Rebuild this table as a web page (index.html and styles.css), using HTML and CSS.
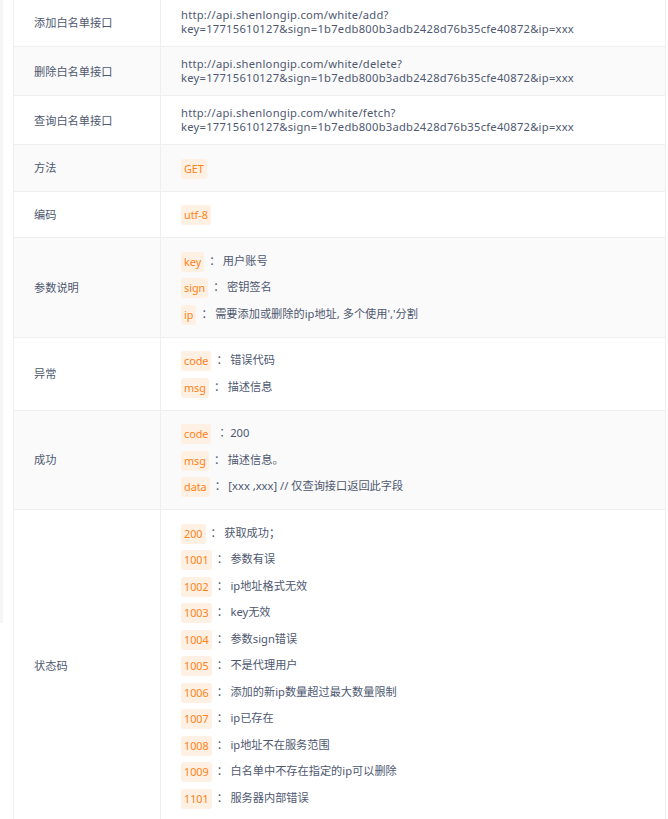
FILE: index.html
```
<!DOCTYPE html>
<html lang="zh-CN">
<head>
  <meta charset="UTF-8" />
  <meta name="viewport" content="width=device-width, initial-scale=1" />
  <title>白名单接口说明</title>
  <link rel="stylesheet" href="styles.css">
</head>
<body>
  <div class="edge"></div>
  <table class="api-table">
    <colgroup>
      <col class="col-label">
      <col>
    </colgroup>
    <tr>
      <td class="label">添加白名单接口</td>
      <td class="url">http://api.shenlongip.com/white/add?<br>key=17715610127&amp;sign=1b7edb800b3adb2428d76b35cfe40872&amp;ip=xxx</td>
    </tr>
    <tr>
      <td class="label">删除白名单接口</td>
      <td class="url">http://api.shenlongip.com/white/delete?<br>key=17715610127&amp;sign=1b7edb800b3adb2428d76b35cfe40872&amp;ip=xxx</td>
    </tr>
    <tr>
      <td class="label">查询白名单接口</td>
      <td class="url">http://api.shenlongip.com/white/fetch?<br>key=17715610127&amp;sign=1b7edb800b3adb2428d76b35cfe40872&amp;ip=xxx</td>
    </tr>
    <tr>
      <td class="label">方法</td>
      <td><div class="item"><span class="tag">GET</span></div></td>
    </tr>
    <tr>
      <td class="label">编码</td>
      <td><div class="item"><span class="tag">utf-8</span></div></td>
    </tr>
    <tr>
      <td class="label">参数说明</td>
      <td>
        <div class="item"><span class="tag">key</span><span class="sep">：</span>用户账号</div>
        <div class="item"><span class="tag">sign</span><span class="sep">：</span>密钥签名</div>
        <div class="item"><span class="tag">ip</span><span class="sep">：</span>需要添加或删除的ip地址, 多个使用','分割</div>
      </td>
    </tr>
    <tr>
      <td class="label">异常</td>
      <td>
        <div class="item"><span class="tag">code</span><span class="sep">：</span>错误代码</div>
        <div class="item"><span class="tag">msg</span><span class="sep">：</span>描述信息</div>
      </td>
    </tr>
    <tr>
      <td class="label">成功</td>
      <td>
        <div class="item"><span class="tag">code</span><span class="sep">：</span>200</div>
        <div class="item"><span class="tag">msg</span><span class="sep">：</span>描述信息。</div>
        <div class="item"><span class="tag">data</span><span class="sep">：</span>[xxx ,xxx] // 仅查询接口返回此字段</div>
      </td>
    </tr>
    <tr>
      <td class="label">状态码</td>
      <td>
        <div class="item"><span class="tag">200</span><span class="sep">：</span>获取成功；</div>
        <div class="item"><span class="tag">1001</span><span class="sep">：</span>参数有误</div>
        <div class="item"><span class="tag">1002</span><span class="sep">：</span>ip地址格式无效</div>
        <div class="item"><span class="tag">1003</span><span class="sep">：</span>key无效</div>
        <div class="item"><span class="tag">1004</span><span class="sep">：</span>参数sign错误</div>
        <div class="item"><span class="tag">1005</span><span class="sep">：</span>不是代理用户</div>
        <div class="item"><span class="tag">1006</span><span class="sep">：</span>添加的新ip数量超过最大数量限制</div>
        <div class="item"><span class="tag">1007</span><span class="sep">：</span>ip已存在</div>
        <div class="item"><span class="tag">1008</span><span class="sep">：</span>ip地址不在服务范围</div>
        <div class="item"><span class="tag">1009</span><span class="sep">：</span>白名单中不存在指定的ip可以删除</div>
        <div class="item"><span class="tag">1101</span><span class="sep">：</span>服务器内部错误</div>
      </td>
    </tr>
  </table>
</body>
</html>
```

FILE: styles.css
```
body { margin: 0; background: #fff; display: flex; align-items: flex-start; font-family: "Noto Sans", "Noto Sans CJK SC", sans-serif; font-size: 11.2px; color: #4e5870; }
.edge { width: 3px; height: 623px; background: #f5f5f6; flex: none; }
.api-table { margin: -3px 0 0 10px; width: 653px; border-collapse: collapse; table-layout: fixed; }
.col-label { width: 147px; }
.api-table td { border: 1px solid #eeeff1; padding: 9.5px 20px; vertical-align: middle; text-align: left; }
.api-table tr:nth-child(even) td { background: #fafafa; }
.label { line-height: 15px; }
.url { line-height: 14.5px; letter-spacing: 0.25px; word-break: break-all; }
.item { line-height: 26.5px; height: 26.5px; white-space: nowrap; }
.tag { display: inline-block; line-height: 20px; padding: 0 3px; font-size: 10.8px; color: #ff8214; background: #fff0e4; border-radius: 3px; vertical-align: middle; }
.sep { font-family: "Noto Sans CJK JP", sans-serif; line-height: 1px; margin: 0 2.5px 0 5px; }
```
